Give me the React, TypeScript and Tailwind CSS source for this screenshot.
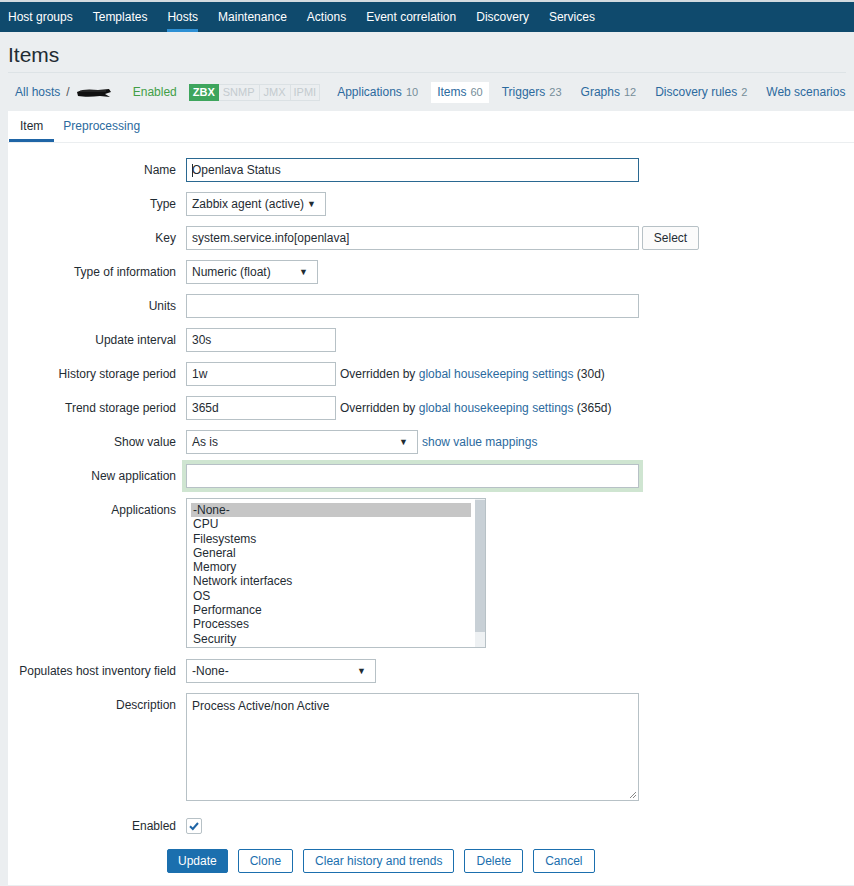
const NAV = [
  "Host groups",
  "Templates",
  "Hosts",
  "Maintenance",
  "Actions",
  "Event correlation",
  "Discovery",
  "Services",
];

const HOST_TABS: { label: string; count?: string; active?: boolean }[] = [
  { label: "Applications", count: "10" },
  { label: "Items", count: "60", active: true },
  { label: "Triggers", count: "23" },
  { label: "Graphs", count: "12" },
  { label: "Discovery rules", count: "2" },
  { label: "Web scenarios" },
];

const APPS = [
  "-None-",
  "CPU",
  "Filesystems",
  "General",
  "Memory",
  "Network interfaces",
  "OS",
  "Performance",
  "Processes",
  "Security",
];

function Row({
  label,
  top,
  children,
  className = "",
}: {
  label: string;
  top?: boolean;
  children: React.ReactNode;
  className?: string;
}) {
  return (
    <div className={`flex gap-[10px] ${top ? "items-start" : "items-center min-h-[24px]"} ${className}`}>
      <div
        className={`w-[168px] shrink-0 text-right whitespace-nowrap ${top ? "pt-[5px] leading-[14px]" : ""}`}
      >
        {label}
      </div>
      <div className="flex items-center">{children}</div>
    </div>
  );
}

function TextBox({
  width,
  value = "",
  focused,
}: {
  width: string;
  value?: string;
  focused?: boolean;
}) {
  return (
    <div
      className={`${width} h-[24px] flex items-center px-[5px] bg-white border ${
        focused ? "border-[#2a6891]" : "border-[#b7c1c6]"
      }`}
    >
      {focused && <span className="w-px h-[13px] bg-[#1f2c33] -mr-px" />}
      {value}
    </div>
  );
}

function SelectBox({ width, value }: { width: string; value: string }) {
  return (
    <div
      className={`${width} h-[24px] flex items-center justify-between pl-[5px] pr-[9px] bg-white border border-[#b7c1c6]`}
    >
      <span>{value}</span>
      <span className="text-[9px] leading-none">▼</span>
    </div>
  );
}

function Link({ children }: { children: React.ReactNode }) {
  return <span className="text-[#2b6a9e]">{children}</span>;
}

export default function App() {
  return (
    <div
      className="min-h-[886px] bg-[#ebeef0] text-[12px] text-[#1f2c33]"
      style={{ fontFamily: '"Liberation Sans", Arial, sans-serif' }}
    >
      {/* top navigation */}
      <div className="h-[2px] bg-[#d3dbe0]" />
      <div className="h-[30px] bg-[#0f4a6d] flex items-stretch pl-[8px] gap-[20px] text-white">
        {NAV.map((item) => (
          <div
            key={item}
            className={`flex items-center border-b-[3px] pt-[3px] ${
              item === "Hosts" ? "border-[#2d8fd4]" : "border-transparent"
            }`}
          >
            {item}
          </div>
        ))}
      </div>

      {/* title */}
      <div className="mx-[8px] h-[41px] flex items-end pb-[7px] border-b border-[#dde3e6]">
        <h1 className="text-[21px] leading-none">Items</h1>
      </div>

      {/* host navigation */}
      <div className="h-[38px] flex items-center pl-[15px] whitespace-nowrap overflow-hidden">
        <span className="shrink-0">
          <Link>All hosts</Link>
        </span>
        <span className="mx-[6px] text-[#555] shrink-0">/</span>
        <svg width="36" height="12" viewBox="0 0 36 12" className="mt-[1px] shrink-0">
          <path
            d="M1 5 C6 2, 14 2, 22 3 L33 2 L35 5 L29 7 L34 10 L24 9 C16 10, 8 10, 2 9 Z"
            fill="#111"
          />
          <path d="M4 4 L30 4" stroke="#444" strokeWidth="0.8" />
        </svg>
        <span className="ml-[21px] text-[#429e47] shrink-0">Enabled</span>
        <div className="ml-[12px] flex h-[17px] text-[11px] leading-[15px] shrink-0">
          <span className="bg-[#3ea55d] text-white font-bold px-[3px] border border-[#3ea55d]">
            ZBX
          </span>
          <span className="text-[#c4cbcf] px-[4px] border border-[#dbe1e4] border-l-0">
            SNMP
          </span>
          <span className="text-[#c4cbcf] px-[4px] border border-[#dbe1e4] border-l-0">
            JMX
          </span>
          <span className="text-[#c4cbcf] px-[3px] border border-[#dbe1e4] border-l-0">
            IPMI
          </span>
        </div>
        <div className="ml-[11px] flex items-center gap-[7px] shrink-0">
          {HOST_TABS.map((t) => (
            <div
              key={t.label}
              className={`h-[21px] flex items-center px-[6px] shrink-0 ${
                t.active ? "bg-white" : ""
              }`}
            >
              <span className="text-[#2b6a9e]">{t.label}</span>
              {t.count && (
                <span className="ml-[4px] text-[11px] text-[#768d99]">{t.count}</span>
              )}
            </div>
          ))}
        </div>
      </div>

      {/* content panel */}
      <div className="ml-[8px] bg-white min-h-[774px]">
        <div className="h-[32px] flex border-b border-[#ebeef0]">
          <div className="ml-[1px] px-[11px] flex items-center pt-[2px] border-b-[3px] border-[#1f65a6]">
            Item
          </div>
          <div className="px-[9px] flex items-center pt-[2px] border-b-[3px] border-transparent text-[#2b6a9e]">
            Preprocessing
          </div>
        </div>

        <div className="pt-[15px] flex flex-col gap-[10px]">
          <Row label="Name">
            <TextBox width="w-[453px]" value="Openlava Status" focused />
          </Row>
          <Row label="Type">
            <SelectBox width="w-[140px]" value="Zabbix agent (active)" />
          </Row>
          <Row label="Key">
            <TextBox width="w-[453px]" value="system.service.info[openlava]" />
            <button className="ml-[3px] h-[24px] w-[57px] border border-[#b7c1c6] rounded-[2px] bg-[#fbfbfb]">
              Select
            </button>
          </Row>
          <Row label="Type of information">
            <SelectBox width="w-[132px]" value="Numeric (float)" />
          </Row>
          <Row label="Units">
            <TextBox width="w-[453px]" />
          </Row>
          <Row label="Update interval">
            <TextBox width="w-[150px]" value="30s" />
          </Row>
          <Row label="History storage period">
            <TextBox width="w-[150px]" value="1w" />
            <span className="ml-[4px] whitespace-nowrap">
              Overridden by <Link>global housekeeping settings</Link> (30d)
            </span>
          </Row>
          <Row label="Trend storage period">
            <TextBox width="w-[150px]" value="365d" />
            <span className="ml-[4px] whitespace-nowrap">
              Overridden by <Link>global housekeeping settings</Link> (365d)
            </span>
          </Row>
          <Row label="Show value">
            <SelectBox width="w-[232px]" value="As is" />
            <span className="ml-[4px]">
              <Link>show value mappings</Link>
            </span>
          </Row>
          <Row label="New application">
            <div className="w-[453px] h-[24px] bg-white border border-[#b7c1c6] shadow-[0_0_0_4px_#cfe5d1]" />
          </Row>
          <Row label="Applications" top>
            <div className="w-[300px] h-[150px] border border-[#b7c1c6] flex">
              <div className="flex-1 pl-[4px] pr-[4px] pt-[4px] leading-[14.3px]">
                {APPS.map((a, i) => (
                  <div key={a} className={`pl-[2px] ${i === 0 ? "bg-[#c6c6c6]" : ""}`}>
                    {a}
                  </div>
                ))}
              </div>
              <div className="w-[10px] flex flex-col bg-[#eef1f3]">
                <div className="mt-[1px] h-[132px] bg-[#c8d0d6]" />
              </div>
            </div>
          </Row>
          <Row label="Populates host inventory field" className="mt-[1px]">
            <SelectBox width="w-[190px]" value="-None-" />
          </Row>
          <Row label="Description" top>
            <div className="relative w-[453px] h-[108px] border border-[#b7c1c6] px-[5px] pt-[5px] leading-[14px]">
              Process Active/non Active
              <svg
                width="8"
                height="8"
                viewBox="0 0 8 8"
                className="absolute right-[1px] bottom-[1px]"
              >
                <path d="M7 1 L1 7 M7 4 L4 7" stroke="#888" strokeWidth="1" />
              </svg>
            </div>
          </Row>
          <Row label="Enabled" className="mt-[3px]">
            <div className="w-[16px] h-[16px] border border-[#b7c1c6] rounded-[2px] flex items-center justify-center bg-white">
              <svg width="12" height="12" viewBox="0 0 12 12">
                <path
                  d="M2 6.2 L4.8 9 L10 3"
                  fill="none"
                  stroke="#1f65a6"
                  strokeWidth="2"
                />
              </svg>
            </div>
          </Row>
          <div className="ml-[159px] mt-[1px] flex gap-[10px]">
            <button className="h-[24px] px-[10px] bg-[#1b6fae] border border-[#1b6fae] text-white rounded-[2px]">
              Update
            </button>
            <button className="h-[24px] px-[11px] border border-[#1b6fae] text-[#1b6fae] rounded-[2px] bg-white">
              Clone
            </button>
            <button className="h-[24px] px-[11px] border border-[#1b6fae] text-[#1b6fae] rounded-[2px] bg-white">
              Clear history and trends
            </button>
            <button className="h-[24px] px-[11px] border border-[#1b6fae] text-[#1b6fae] rounded-[2px] bg-white">
              Delete
            </button>
            <button className="h-[24px] px-[11px] border border-[#1b6fae] text-[#1b6fae] rounded-[2px] bg-white">
              Cancel
            </button>
          </div>
        </div>
      </div>
    </div>
  );
}
